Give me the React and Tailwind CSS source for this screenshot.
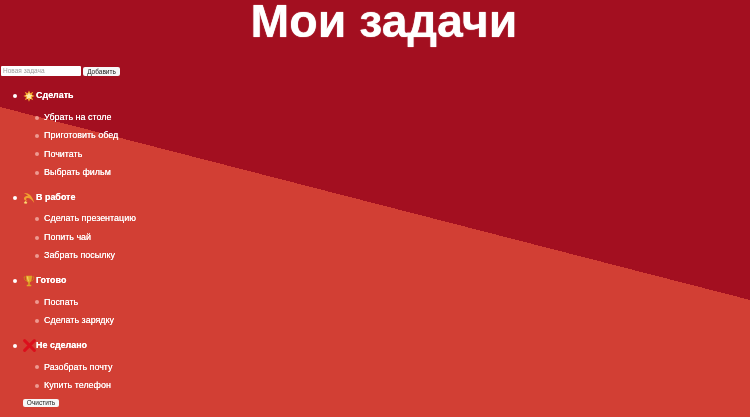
function Glow() {
  return (
    <svg viewBox="0 0 16 16" className="w-[12px] h-[12px] shrink-0">
      <path d="M8 .5 9.800 4.200 13.600 2.400 11.800 6.200 15.500 8 11.800 9.800 13.600 13.600 9.800 11.800 8 15.500 6.200 11.800 2.400 13.600 4.200 9.800.5 8 4.200 6.200 2.400 2.400 6.200 4.200Z" fill="#f3a52a" />
      <path d="M8 3.200 9.500 6.200 12.800 6.700 10.400 9 11 12.300 8 10.700 5 12.300 5.600 9 3.200 6.700 6.500 6.200Z" fill="#fde7a6" />
    </svg>
  );
}
function Dizzy() {
  return (
    <svg viewBox="0 0 16 16" className="w-[12px] h-[12px] shrink-0">
      <path d="M1.500 1.500C7 1 12.500 5 15 14.500 11.500 9.500 8.500 7.500 5.500 8 3.500 8.500 3.500 11 6 11.500 2.500 12 .5 9.500 1.500 7.500 2.500 5.500 5 5 7 5.500 5.500 3.500 3.500 2.500 1.500 1.500Z" fill="#f0a030" />
      <path d="M3.500 11.500 4.300 13 6 13.300 4.800 14.500 5 16 3.500 15.300 2 16 2.200 14.500 1 13.300 2.700 13Z" fill="#fcdc70" />
    </svg>
  );
}
function Trophy() {
  return (
    <svg viewBox="0 0 16 16" className="w-[12px] h-[12px] shrink-0">
      <path d="M3.500 2.500H1.500c0 3 1 5 3.500 5.500M12.500 2.500h2c0 3-1 5-3.500 5.500" fill="none" stroke="#c98a1a" strokeWidth="1.300" />
      <path d="M4 1h8c0 5-1 8-3 9v3h2v2H5v-2h2v-3C5 9 4 6 4 1Z" fill="#e0a526" />
      <path d="M5.500 2h1.500c0 3 .3 5 1 7C6.500 8 5.500 6 5.500 2Z" fill="#f7d66a" />
    </svg>
  );
}
function Cross() {
  return (
    <svg viewBox="0 0 16 16" className="w-[13px] h-[13px] shrink-0">
      <path d="M2 2l12 12M14 2 2 14" stroke="#dc0f1c" strokeWidth="3.600" strokeLinecap="round" />
    </svg>
  );
}

const sections = [
  { icon: <Glow />, title: "Сделать", items: ["Убрать на столе", "Приготовить обед", "Почитать", "Выбрать фильм"] },
  { icon: <Dizzy />, title: "В работе", items: ["Сделать презентацию", "Попить чай", "Забрать посылку"] },
  { icon: <Trophy />, title: "Готово", items: ["Поспать", "Сделать зарядку"] },
  { icon: <Cross />, title: "Не сделано", items: ["Разобрать почту", "Купить телефон"] },
];

export default function App() {
  return (
    <div className="w-[750px] h-[417px] overflow-hidden text-white font-['Liberation_Sans',Arial,sans-serif] bg-[linear-gradient(194.43deg,#a30f20_290.5px,#d23f34_290.5px)]">
      <div className="blur-[0.3px]">
        <h1 className="h-[66px] pl-[18px] text-center text-[46.500px] leading-[42px] font-bold [text-shadow:0_0_1px_#fff]">Мои задачи</h1>
        <div className="flex items-center h-[10px] pl-[1px]">
          <input
            placeholder="Новая задача"
            className="w-[80px] h-[10px] bg-white rounded-[1px] px-[2px] text-[6.500px] leading-[10px] text-black placeholder:text-[#a0a0a0] outline-none"
          />
          <button className="ml-[2px] w-[37px] h-[9px] bg-[#f7f7f7] rounded-[2px] text-[6.500px] leading-[9px] text-[#222]">Добавить</button>
        </div>
        <ul className="mt-[14px] flex flex-col gap-[13px] [text-shadow:0_0_0.6px_#fff]">
          {sections.map((s) => (
            <li key={s.title}>
              <div className="flex items-center h-[12px] pl-[13px]">
                <span className="w-[4px] h-[4px] rounded-full bg-white shrink-0" />
                <span className="ml-[6px] w-[13px] flex shrink-0">{s.icon}</span>
                <span className="text-[8.950px] font-bold">{s.title}</span>
              </div>
              <ul className="mt-[9.500px] flex flex-col gap-[6.400px] pl-[35px]">
                {s.items.map((t) => (
                  <li key={t} className="flex items-center h-[12px]">
                    <span className="w-[4px] h-[4px] rounded-full bg-[#ee9a90] shrink-0" />
                    <span className="ml-[5px] text-[8.950px]">{t}</span>
                  </li>
                ))}
              </ul>
            </li>
          ))}
        </ul>
        <button className="block ml-[23px] mt-[7px] w-[36px] h-[8px] bg-[#f7f7f7] rounded-[2px] text-[6.500px] leading-[8px] text-[#222]">Очистить</button>
      </div>
    </div>
  );
}
